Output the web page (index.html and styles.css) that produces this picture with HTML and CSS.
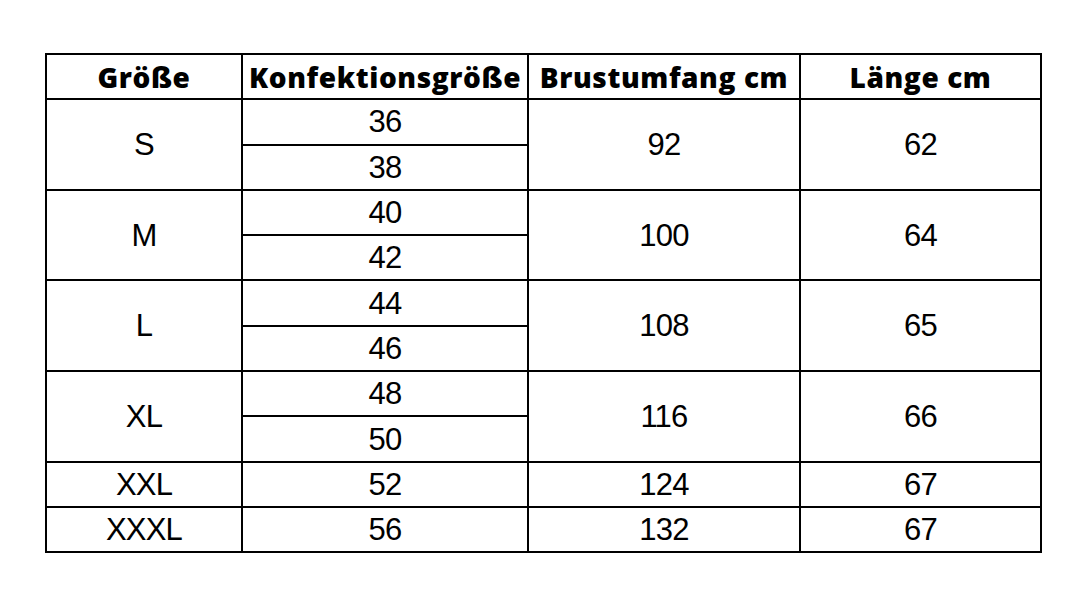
FILE: index.html
```html
<!DOCTYPE html>
<html lang="de">
<head>
<meta charset="utf-8">
<link rel="stylesheet" href="styles.css">
</head>
<body>
<div class="page">
<table class="sizes">
<colgroup>
<col class="c1"><col class="c2"><col class="c3"><col class="c4">
</colgroup>
<thead>
<tr><th>Größe</th><th>Konfektionsgröße</th><th>Brustumfang cm</th><th>Länge cm</th></tr>
</thead>
<tbody>
<tr><td rowspan="2">S</td><td>36</td><td rowspan="2">92</td><td rowspan="2">62</td></tr>
<tr><td>38</td></tr>
<tr><td rowspan="2">M</td><td>40</td><td rowspan="2">100</td><td rowspan="2">64</td></tr>
<tr><td>42</td></tr>
<tr><td rowspan="2">L</td><td>44</td><td rowspan="2">108</td><td rowspan="2">65</td></tr>
<tr><td>46</td></tr>
<tr><td rowspan="2">XL</td><td>48</td><td rowspan="2">116</td><td rowspan="2">66</td></tr>
<tr><td>50</td></tr>
<tr><td>XXL</td><td>52</td><td>124</td><td>67</td></tr>
<tr><td>XXXL</td><td>56</td><td>132</td><td>67</td></tr>
</tbody>
</table>
</div>
</body>
</html>
```
FILE: styles.css
```css
html, body {
  margin: 0;
  padding: 0;
  background: #ffffff;
}
.page {
  padding: 53px 0 0 45px;
}
.sizes {
  border-collapse: collapse;
  width: 995px;
  table-layout: fixed;
  color: #000;
}
.c1 { width: 196px; }
.c2 { width: 286px; }
.c3 { width: 272px; }
.c4 { width: 241px; }
.sizes th, .sizes td {
  border: 2px solid #000;
  padding: 0;
  height: 43.3px;
  text-align: center;
  vertical-align: middle;
  line-height: 1;
}
.sizes th {
  font-family: "Open Sans", Roboto, sans-serif;
  font-weight: 800;
  font-size: 28px;
  letter-spacing: 0.6px;
}
.sizes td {
  font-family: "Liberation Sans", Arial, sans-serif;
  font-size: 31px;
  letter-spacing: -0.8px;
}
```
